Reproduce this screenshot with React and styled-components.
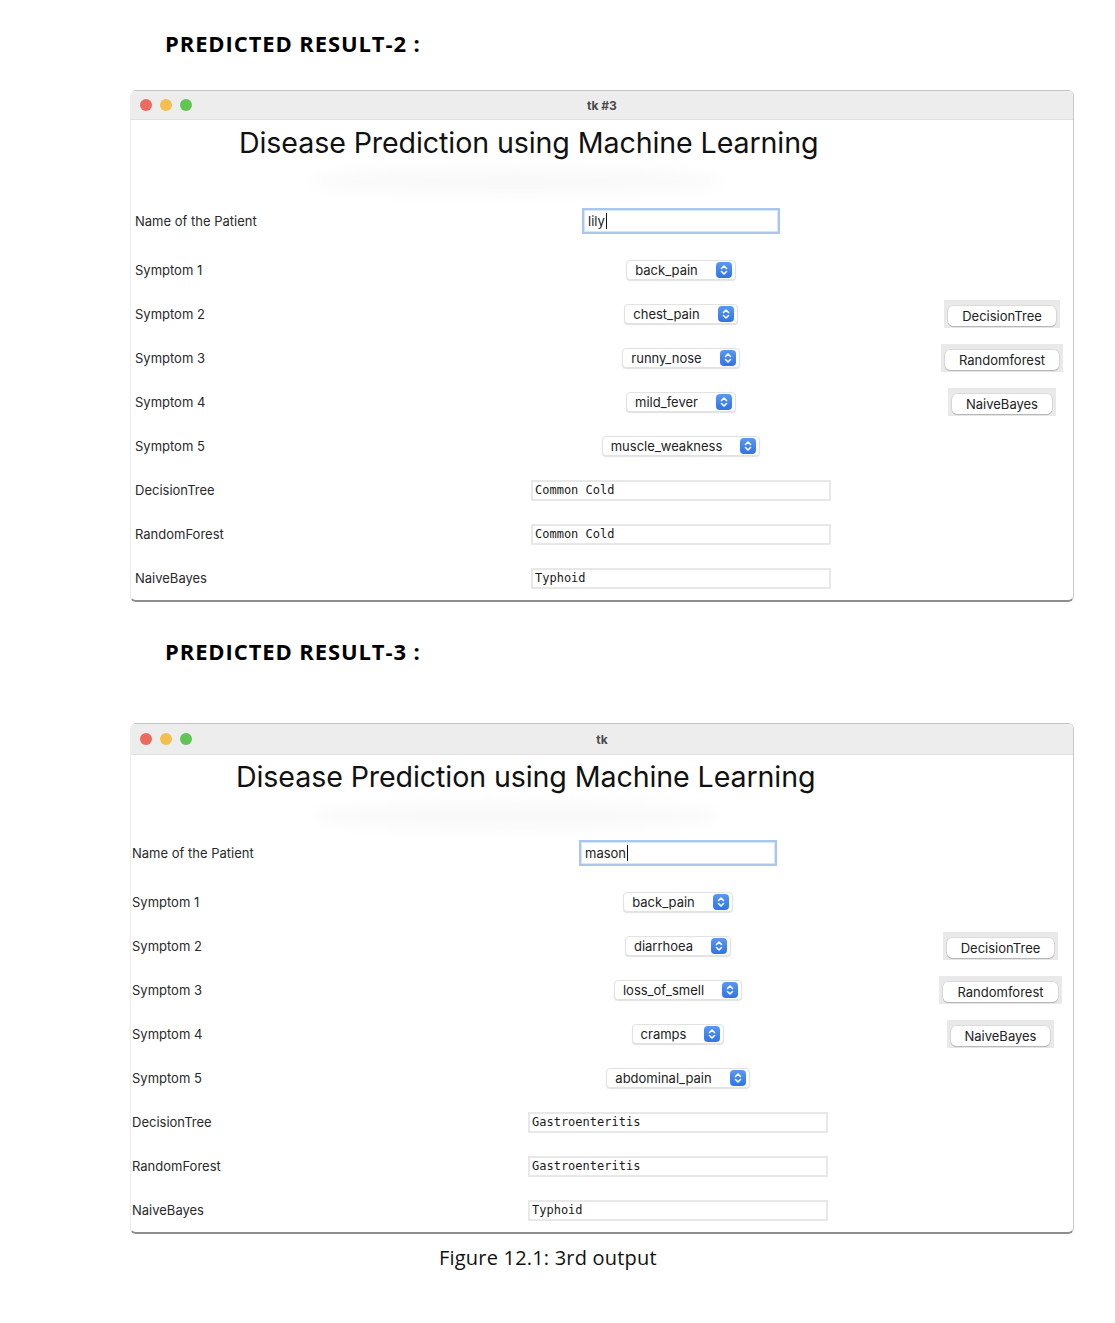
import React from 'react';
import styled, { createGlobalStyle } from 'styled-components';

const GlobalStyle = createGlobalStyle`
    html, body {
        margin: 0;
        padding: 0;
        background: #fff;
    }
    * {
        box-sizing: border-box;
    }
`;

const Page = styled.div`
    width: 1117px;
    height: 1323px;
    background: #fff;
    border-right: 2px solid #d6d6d6;
    display: flex;
    flex-direction: column;
    overflow: hidden;
`;

const SectionTitle = styled.h2`
    margin: ${p => p.$top}px 0 0 165px;
    font-family: "Open Sans", "Liberation Sans", sans-serif;
    font-size: 22px;
    font-weight: 700;
    line-height: 30px;
    color: #000;
    letter-spacing: 0.9px;
`;

const Window = styled.div`
    margin: ${p => p.$top}px 0 0 130px;
    width: 944px;
    background: #fff;
    border-left: 1px solid #ececec;
    border-right: 1px solid #c8c8c8;
    border-bottom: 2px solid #8e8e8e;
    border-radius: 6px;
    overflow: hidden;
`;

const TitleBar = styled.div`
    height: ${p => p.$h}px;
    background: #ededed;
    border-top: 1px solid #c2c2c2;
    border-bottom: 1px solid #e2e2e2;
    display: flex;
    align-items: center;
    position: relative;
    padding-left: 9px;
`;

const Lights = styled.div`
    display: flex;
    gap: 8px;
`;

const Light = styled.span`
    width: 12px;
    height: 12px;
    border-radius: 50%;
    background: ${p => p.$color};
`;

const WinTitle = styled.div`
    position: absolute;
    left: 0;
    right: 0;
    text-align: center;
    font-family: Inter, "Liberation Sans", sans-serif;
    font-size: 12px;
    font-weight: 700;
    color: #4a4a4a;
`;

const Heading = styled.div`
    height: ${p => p.$h}px;
    padding: ${p => p.$pt}px 0 0 ${p => 104 + p.$offset}px;
    position: relative;
`;

const HeadingText = styled.h1`
    margin: 0;
    font-family: Inter, "Liberation Sans", sans-serif;
    font-size: 28.6px;
    font-weight: 400;
    line-height: 36px;
    color: #111;
    letter-spacing: -0.1px;
`;

const Smudge = styled.div`
    position: absolute;
    left: 180px;
    top: 48px;
    width: 410px;
    height: 26px;
    border-radius: 50%;
    background: rgba(0, 0, 0, 0.022);
    filter: blur(7px);
`;

const Row = styled.div`
    display: grid;
    grid-template-columns: 396px 300px 1fr;
    align-items: center;
    height: ${p => p.$h || 44}px;
    padding-left: ${p => p.$offset}px;
    padding-bottom: ${p => (p.$h ? p.$h - 44 : 0)}px;
`;

const Label = styled.span`
    font-family: Inter, "Liberation Sans", sans-serif;
    font-size: 13px;
    color: #2a2a2a;
`;

const Center = styled.div`
    justify-self: center;
`;

const Side = styled.div`
    justify-self: center;
    padding-left: 100px;
`;

const NameEntry = styled.div`
    width: 198px;
    height: 26px;
    border: 2px solid #a9c6ec;
    box-shadow: inset 0 0 0 1px #d8e5f6;
    display: flex;
    align-items: center;
    padding-left: 4px;
    font-family: Inter, "Liberation Sans", sans-serif;
    font-size: 13px;
    color: #222;
`;

const Caret = styled.span`
    width: 1px;
    height: 16px;
    background: #111;
    margin-left: 1px;
`;

const Combo = styled.div`
    height: 20px;
    display: flex;
    align-items: center;
    gap: 18px;
    padding: 0 3px 0 8px;
    background: #fff;
    border: 1px solid #e2e2e2;
    border-radius: 4px;
    box-shadow: 0 1px 1px rgba(0, 0, 0, 0.12);
    font-family: Inter, "Liberation Sans", sans-serif;
    font-size: 13px;
    color: #222;
`;

const Stepper = styled.span`
    width: 16px;
    height: 16px;
    border-radius: 4px;
    background: linear-gradient(#5a98f2, #2f74e6);
    display: flex;
    align-items: center;
    justify-content: center;
`;

const ResultEntry = styled.div`
    width: 300px;
    height: 21px;
    border: 2px solid #e8e8e8;
    background: #fff;
    display: flex;
    align-items: center;
    padding-left: 2px;
    font-family: "DejaVu Sans Mono", "Liberation Mono", monospace;
    font-size: 12px;
    color: #1a1a1a;
`;

const ButtonWell = styled.div`
    background: #e9e9e9;
    padding: 6px 4px 2px 4px;
`;

const Button = styled.div`
    height: 20px;
    padding: 0 14px;
    display: flex;
    align-items: center;
    background: #fff;
    border-radius: 5px;
    box-shadow: 0 0 0 0.5px rgba(0, 0, 0, 0.12), 0 1px 1px rgba(0, 0, 0, 0.18);
    font-family: Inter, "Liberation Sans", sans-serif;
    font-size: 13px;
    color: #222;
`;

const Caption = styled.div`
    margin: 10px 0 0 439px;
    font-family: "Open Sans", "Liberation Sans", sans-serif;
    font-size: 20px;
    line-height: 28px;
    color: #111;
    letter-spacing: 0.2px;
`;

const StepIcon = () => (
    <svg width="10" height="12" viewBox="0 0 10 12" fill="none" stroke="#fff" strokeWidth="1.6" strokeLinecap="round" strokeLinejoin="round">
        <path d="M2.5 4.5 5 2l2.5 2.5" />
        <path d="M2.5 7.5 5 10l2.5-2.5" />
    </svg>
);

const buttons = ['DecisionTree', 'Randomforest', 'NaiveBayes'];

const AppWindow = ({ title, name, symptoms, results, offset, barH, headH, headTop }) => (
    <>
        <TitleBar $h={barH}>
            <Lights>
                <Light $color="#ec6a5e" />
                <Light $color="#f4bf4f" />
                <Light $color="#61c554" />
            </Lights>
            <WinTitle>{title}</WinTitle>
        </TitleBar>
        <Heading $h={headH} $pt={headTop} $offset={offset}>
            <HeadingText>Disease Prediction using Machine Learning</HeadingText>
            <Smudge />
        </Heading>
        <Row $h={49} $offset={offset}>
            <Label>Name of the Patient</Label>
            <Center>
                <NameEntry>{name}<Caret /></NameEntry>
            </Center>
        </Row>
        {symptoms.map((s, i) => (
            <Row key={i} $offset={offset}>
                <Label>Symptom {i + 1}</Label>
                <Center>
                    <Combo>
                        {s}
                        <Stepper><StepIcon /></Stepper>
                    </Combo>
                </Center>
                {i >= 1 && i <= 3 && (
                    <Side>
                        <ButtonWell>
                            <Button>{buttons[i - 1]}</Button>
                        </ButtonWell>
                    </Side>
                )}
            </Row>
        ))}
        {results.map(([label, value]) => (
            <Row key={label} $offset={offset}>
                <Label>{label}</Label>
                <Center>
                    <ResultEntry>{value}</ResultEntry>
                </Center>
            </Row>
        ))}
    </>
);

export default function App() {
    return (
        <Page>
            <GlobalStyle />
            <SectionTitle $top={28}>PREDICTED RESULT-2 :</SectionTitle>
            <Window $top={32}>
                <AppWindow
                    title="tk #3"
                    name="lily"
                    offset={4}
                    barH={30}
                    headH={79}
                    headTop={5}
                    symptoms={['back_pain', 'chest_pain', 'runny_nose', 'mild_fever', 'muscle_weakness']}
                    results={[['DecisionTree', 'Common Cold'], ['RandomForest', 'Common Cold'], ['NaiveBayes', 'Typhoid']]}
                />
            </Window>
            <SectionTitle $top={34}>PREDICTED RESULT-3 :</SectionTitle>
            <Window $top={57}>
                <AppWindow
                    title="tk"
                    name="mason"
                    offset={1}
                    barH={32}
                    headH={76}
                    headTop={4}
                    symptoms={['back_pain', 'diarrhoea', 'loss_of_smell', 'cramps', 'abdominal_pain']}
                    results={[['DecisionTree', 'Gastroenteritis'], ['RandomForest', 'Gastroenteritis'], ['NaiveBayes', 'Typhoid']]}
                />
            </Window>
            <Caption>Figure 12.1: 3rd output</Caption>
        </Page>
    );
}
